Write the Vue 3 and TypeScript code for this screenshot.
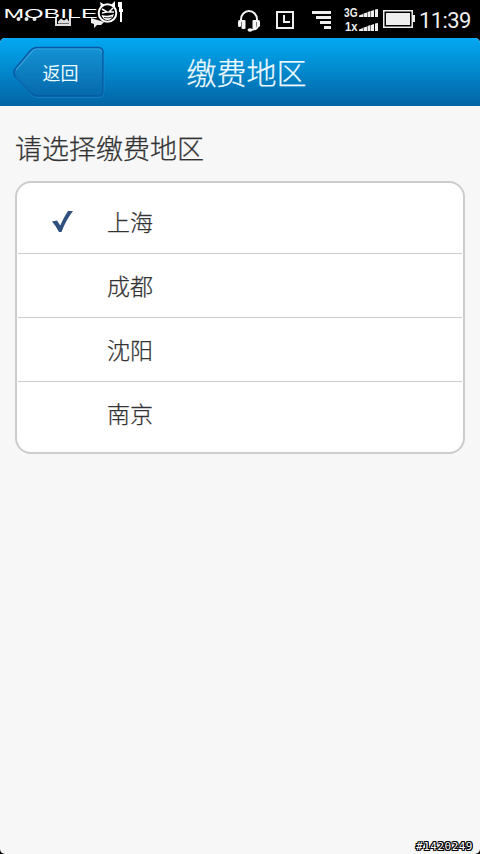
<script setup lang="ts">
import { ref } from 'vue'

const regions = ['上海', '成都', '沈阳', '南京']
const selected = ref(0)
</script>

<template>
  <div class="screen">
    <div class="status">
      <svg class="brand" width="130" height="38" viewBox="0 0 130 38">
        <g fill="#e8e8e8">
          <circle cx="18.500" cy="19" r="2" /><circle cx="26.500" cy="19" r="2" /><circle cx="34.500" cy="19" r="2" />
        </g>
        <path d="M56 17V25H70V17" fill="none" stroke="#ddd" stroke-width="2" />
        <path d="M58 23.500V21.500L61 18.500L64 20.500L67 18.500L69 21.500V23.500Z" fill="#ddd" />
        <path d="M91 18L104 22L101 25L97 25L94 28L94 24L91 23Z" fill="#eee" />
        <text class="logo" x="3.500" y="17.500" textLength="94" lengthAdjust="spacingAndGlyphs">MOBILE</text>
        <path d="M101 7L100 2L105 5Q108 4 111 5L115 1L115 8" fill="#fff" />
        <circle cx="107.500" cy="13" r="8.800" fill="#000" stroke="#fff" stroke-width="2" />
        <path d="M102 9L107 12L102 13M113 8L109 12L114 12" fill="none" stroke="#fff" stroke-width="1.500" />
        <path d="M101.500 15Q108 17 114 14Q112 20 107.500 20Q103 20 101.500 15Z" fill="#fff" />
        <path d="M104 17.500Q108 18.500 112 17" fill="none" stroke="#333" stroke-width="1" />
        <path d="M118 2H122V9H123V12H122V22H120V12H119V7H118Z" fill="#fff" />
      </svg>
      <svg class="icons" width="190" height="38" viewBox="230 0 190 38">
        <path d="M241 22V19.500A8 8.500 0 0 1 257 19.500V22" fill="none" stroke="#f4f4f4" stroke-width="2" />
        <rect x="238" y="20" width="3" height="7" rx="1.500" fill="#f4f4f4" />
        <rect x="241.500" y="20" width="4" height="9" rx="1" fill="#f4f4f4" />
        <rect x="252.500" y="20" width="4" height="9" rx="1" fill="#f4f4f4" />
        <rect x="257" y="20" width="3" height="7" rx="1.500" fill="#f4f4f4" />
        <path d="M258 26Q257 30 250 30" fill="none" stroke="#f4f4f4" stroke-width="1.800" />
        <ellipse cx="250" cy="30" rx="2.500" ry="1.800" fill="#f4f4f4" />
        <rect x="277" y="12" width="16" height="16" fill="none" stroke="#eee" stroke-width="2" />
        <path d="M284 15V22H290" fill="none" stroke="#eee" stroke-width="2" />
        <path d="M312 11H331V14H312ZM316 16H331V19H316ZM320 21H331V24H320ZM324 26H331V29H324Z" fill="#eee" />
        <g class="net">
          <text x="344" y="17" textLength="13.500" lengthAdjust="spacingAndGlyphs">3G</text>
          <text x="345" y="31" textLength="12.500" lengthAdjust="spacingAndGlyphs">1x</text>
        </g>
        <g fill="#eee">
          <path d="M359 15.500L363 14V17H359ZM363.500 13.500L367 12.500V17H363.500ZM367.500 12L370.500 11V17H367.500ZM371 11L374 10V17H371ZM375 9.500L378 9V17H375Z" />
          <path d="M359 29.500L363 28V31H359ZM363.500 27.500L367 26.500V31H363.500ZM367.500 26L370.500 25V31H367.500ZM371 25L374 24V31H371ZM375 23.500L378 23V31H375Z" />
        </g>
        <rect x="383.750" y="10.750" width="28.500" height="16.500" fill="none" stroke="#eee" stroke-width="1.500" />
        <rect x="386" y="13" width="24" height="12" fill="#eee" />
        <rect x="413" y="15" width="2" height="7" fill="#eee" />
      </svg>
      <span class="clock">11:39</span>
    </div>

    <main class="app">
      <header class="header">
        <button class="back" type="button">
          <svg class="back-shape" width="93" height="53" viewBox="0 0 93 53">
            <defs>
              <linearGradient id="backFill" x1="0" y1="0" x2="0" y2="1">
                <stop offset="0" stop-color="#1593d5" />
                <stop offset="1" stop-color="#0569ab" />
              </linearGradient>
            </defs>
            <path d="M25 1.500H86Q91 1.500 91 6.500V45Q91 50 86 50H25Q21 50 18 46.500L3 30Q0.500 26.500 3 23L18 5Q21 1.500 25 1.500Z" fill="url(#backFill)" stroke="#0759a5" stroke-width="1.500" />
            <path d="M4 24L19 6.500Q22 3 25 3H86Q89.500 3 89.500 6.500" fill="none" stroke="#49addf" stroke-opacity=".65" stroke-width="1.200" />
            <path d="M4 31L18 47.500Q21 51.500 25 51.500H86Q92 51.500 92 45.500V7" fill="none" stroke="#2793cf" stroke-opacity=".5" stroke-width="1" />
          </svg>
          <span class="back-label">返回</span>
        </button>
        <h1 class="title">缴费地区</h1>
      </header>

      <h2 class="prompt">请选择缴费地区</h2>
      <ul class="list">
        <li v-for="(region, i) in regions" :key="region" class="row" @click="selected = i">
          <span class="mark">
            <svg v-if="selected === i" width="22" height="22" viewBox="0 0 22 22">
              <path d="M0 10.500L5 9.500L8.300 14.500C10.500 9.500 13 4.500 16 0L21 0C16 6.500 12 14 9.500 21H7Q4 15 0 10.500Z" fill="#30507f" />
            </svg>
          </span>
          <span class="name">{{ region }}</span>
        </li>
      </ul>
      <span class="stamp">#1420249</span>
    </main>
  </div>
</template>

<style>
body {
  background: #000;
}
</style>

<style scoped>
.screen {
  width: 480px;
  height: 854px;
  display: flex;
  flex-direction: column;
  background: #000;
  color: #333;
  font-family: "Noto Sans CJK SC", sans-serif;
  font-weight: 300;
  overflow: hidden;
}
.status {
  height: 38px;
  display: flex;
  flex: none;
}
.icons {
  margin-left: 100px;
}
.logo {
  font: 400 13px "Liberation Sans", sans-serif;
  fill: #fff;
}
.net {
  font: 700 13px "Liberation Sans", sans-serif;
  fill: #eee;
}
.clock {
  margin-left: -1px;
  font: 400 22px/42px Roboto, sans-serif;
  letter-spacing: -0.6px;
  color: #eee;
  white-space: nowrap;
}
.app {
  position: relative;
  flex: 1;
  background: #f7f7f7;
  border-radius: 5px;
  overflow: hidden;
}
.header {
  height: 68px;
  box-sizing: border-box;
  display: grid;
  grid-template-columns: 104px 1fr 91px;
  align-items: center;
  background: linear-gradient(#03a9f2, #0264a4);
}
.back {
  width: 93px;
  height: 53px;
  margin-left: 12px;
  padding: 0;
  border: 0;
  background: none;
  display: grid;
  color: #ecfaff;
  font: 400 18px/53px "Noto Sans CJK SC", sans-serif;
}
.back-shape,
.back-label {
  grid-area: 1 / 1;
}
.back-label {
  padding-left: 4px;
}
.title {
  margin: 0;
  padding-bottom: 2px;
  text-align: center;
  color: #effaff;
  font-size: 30px;
  line-height: 66px;
  font-weight: 300;
  -webkit-text-stroke: 0.25px currentColor;
}
.prompt {
  margin: 21px 15px 13px;
  font-size: 27px;
  line-height: 41px;
  font-weight: 300;
  -webkit-text-stroke: 0.25px currentColor;
}
.list {
  list-style: none;
  margin: 0 15px;
  padding: 7px 1px;
  height: 273px;
  box-sizing: border-box;
  background: #fff;
  border: 2px solid #ccc;
  border-radius: 16px;
}
.row {
  height: 64px;
  box-sizing: border-box;
  display: flex;
  align-items: center;
  border-bottom: 1px solid #ccc;
  font-size: 23px;
}
.row:last-child {
  border-bottom: 0;
}
.mark {
  width: 55px;
  height: 22px;
  padding-left: 34px;
}
.mark svg {
  display: block;
}
.name {
  padding-bottom: 2px;
  -webkit-text-stroke: 0.25px currentColor;
}
.stamp {
  position: absolute;
  right: 7px;
  bottom: 1px;
  font: 400 11px/13px "DejaVu Sans Mono", monospace;
  letter-spacing: 0.5px;
  color: #fff;
  text-shadow: -1px -1px #000, 1px -1px #000, -1px 1px #000, 1px 1px #000, 0 1px #000, 0 -1px #000, 1px 0 #000, -1px 0 #000;
}
</style>
